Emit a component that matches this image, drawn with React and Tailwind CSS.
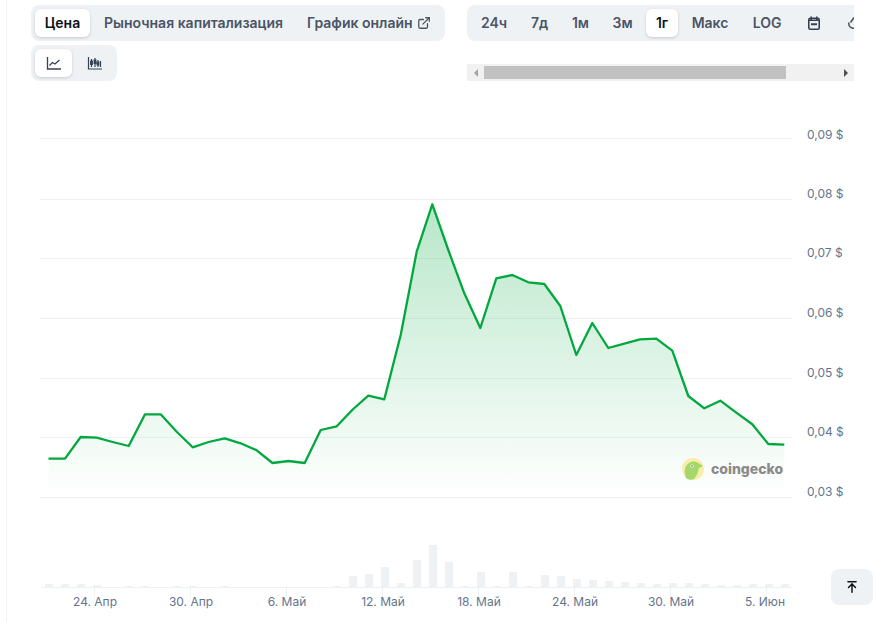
import React from 'react';
import { ExternalLink, ArrowUpToLine } from 'lucide-react';

const points = [
  [48.5, 458.7], [65, 458.7], [80.7, 437], [96.7, 437.7], [112.7, 442], [128.7, 446], [145, 414.3], [160.7, 414.3],
  [176.7, 431.7], [192.7, 447.3], [208.5, 442], [224.7, 438.3], [240.7, 443.3], [256.7, 450.3], [272.5, 463], [288.7, 461],
  [304.7, 463], [320.7, 430], [336.7, 426.3], [352.7, 409.5], [368.3, 395.7], [384.3, 399.3], [400.7, 335], [416.7, 251.7],
  [432.3, 204.3], [448.3, 250], [464.3, 293.3], [480.3, 328], [496.3, 278.3], [512.3, 275], [528.3, 282.3], [544.3, 284],
  [560.3, 306], [576.3, 355], [592.3, 323], [608.3, 348], [624.3, 343.7], [640, 339.3], [656.3, 338.7], [672.3, 350.7],
  [688.3, 396], [704.3, 408.3], [720.3, 400.7], [736.3, 412.7], [752.3, 424.3], [768.3, 444], [784.3, 444.7],
];

const volumes = [
  3, 3, 3, 2, 0, 1, 1, 0, 1, 1, 0, 1, 0, 0, 0, 0, 0, 0, 1, 11, 13, 20, 4, 27, 42, 25, 1, 15, 1, 15, 1, 12, 11, 8, 7, 6, 5, 4, 3, 4, 4, 3, 2, 2, 3, 3, 3,
];

const gridLines = [138, 199, 258, 318, 378, 437, 497];
const priceLabels = [
  ['0,09 $', 139], ['0,08 $', 198], ['0,07 $', 257], ['0,06 $', 317], ['0,05 $', 377], ['0,04 $', 436], ['0,03 $', 496],
];
const dateLabels = [
  ['24. Апр', 95], ['30. Апр', 191], ['6. Май', 287], ['12. Май', 383], ['18. Май', 479], ['24. Май', 575], ['30. Май', 671],
];
const dateTicks = [94.5, 190.5, 286.5, 382.5, 478.5, 574.5, 670.5, 766.5];

const line = points.map((p) => p.join(',')).join(' ');
const area = `48.5,488 ${line} 784.3,488`;

const Tab = ({ active, className, children }) => (
  <div
    className={
      active
        ? `flex h-7 shrink-0 items-center rounded-md bg-white text-[#0d1217] shadow-[0_1px_3px_rgba(16,24,40,0.18)] ${className}`
        : `flex h-7 shrink-0 items-center text-[#4b5565] ${className}`
    }
  >
    {children}
  </div>
);

const LineIcon = () => (
  <svg width="16" height="16" viewBox="0 0 16 16" fill="none" stroke="#364152" strokeWidth="1.3">
    <path d="M1.5 2v12h13.5" />
    <path d="M3.5 10.5l3-3 2.5 1.5 4.5-4" />
  </svg>
);

const CandleIcon = () => (
  <svg width="16" height="16" viewBox="0 0 16 16" fill="none" stroke="#364152" strokeWidth="1.2">
    <path d="M1.5 2v12h13.5" />
    <path d="M4.5 4v8M8 3v9M11 5v7M13.5 6v6" />
    <path d="M3.7 6h1.6v3.5H3.7zM7.2 5h1.6v3.5H7.2zM10.2 7h1.6v3H10.2z" fill="#364152" />
  </svg>
);

const CalendarIcon = () => (
  <svg width="12" height="14" viewBox="0 0 12 14" fill="none" stroke="#364152" strokeWidth="1.6">
    <rect x="0.8" y="2.3" width="10.4" height="10.9" rx="1.5" />
    <path d="M3.2 0.5v3M8.8 0.5v3M1 4.3h10" />
    <path d="M3 8.2h6" strokeWidth="2" />
  </svg>
);

// only the left edge of this icon is showing, the rest is cut off by the tab bar
const CutOffIcon = () => (
  <svg width="6" height="14" viewBox="0 0 6 14" fill="none" stroke="#4b5565" strokeWidth="1.6">
    <path d="M0.8 6.5v1.2c0 2.6 2.2 4.6 5.2 4.6" />
    <path d="M2.5 6.5L6 1.5" />
  </svg>
);

const Scrollbar = () => (
  <div className="mt-[23px] flex h-[17px] w-[387px] items-center bg-[#f1f1f1]">
    <div className="flex w-[17px] justify-center">
      <div className="h-0 w-0 border-y-4 border-r-4 border-y-transparent border-r-[#a3a3a3]" />
    </div>
    <div className="h-[13px] w-[302px] bg-[#c1c1c1]" />
    <div className="flex flex-1 justify-end pr-[6px]">
      <div className="h-0 w-0 border-y-4 border-l-4 border-y-transparent border-l-[#505050]" />
    </div>
  </div>
);

export default function App() {
  return (
    <div className="relative h-[622px] w-[877px] overflow-hidden bg-white font-['Inter',sans-serif]">
      <div className="ml-[6px] h-full border-l border-[#f3f4f6] pl-[24px] pt-[5px]">
        <div className="flex items-start justify-between pr-[23px]">
          <div className="flex w-[414px] flex-col gap-1">
            <div className="flex h-9 items-center rounded-lg bg-[#eff2f5] px-1 text-sm font-semibold">
              <Tab active className="w-[55px] justify-center">Цена</Tab>
              <Tab className="ml-[14px]">Рыночная капитализация</Tab>
              <Tab className="ml-6">
                График онлайн
                <ExternalLink className="ml-1" size={14} strokeWidth={2.2} />
              </Tab>
            </div>
            <div className="flex h-9 w-[86px] items-center gap-1 rounded-lg bg-[#eff2f5] px-1">
              <Tab active className="w-[37px] justify-center"><LineIcon /></Tab>
              <Tab className="w-[37px] justify-center"><CandleIcon /></Tab>
            </div>
          </div>

          <div className="w-[387px]">
            <div className="flex h-9 items-center overflow-hidden rounded-l-lg bg-[#eff2f5] pl-[14px] text-sm font-semibold">
              <Tab className="w-[26px] justify-center">24ч</Tab>
              <Tab className="ml-6 w-[17px] justify-center">7д</Tab>
              <Tab className="ml-6 w-[17px] justify-center">1м</Tab>
              <Tab className="ml-6 w-[19px] justify-center">3м</Tab>
              <Tab active className="ml-[14px] w-[32px] justify-center">1г</Tab>
              <Tab className="ml-[14px] w-[36px] justify-center">Макс</Tab>
              <Tab className="ml-[25px] w-[28px] justify-center">LOG</Tab>
              <Tab className="ml-[27px]"><CalendarIcon /></Tab>
              <Tab className="ml-[28px]"><CutOffIcon /></Tab>
            </div>
            <Scrollbar />
          </div>
        </div>
      </div>

      {/* chart is one drawing, same coordinates as the page */}
      <svg className="absolute left-0 top-0" width="877" height="622" viewBox="0 0 877 622" fontFamily="Inter, sans-serif" fontSize="12">
        <defs>
          <linearGradient id="priceFill" gradientUnits="userSpaceOnUse" x1="0" y1="204" x2="0" y2="498">
            <stop offset="0" stopColor="#00a83e" stopOpacity="0.28" />
            <stop offset="1" stopColor="#00a83e" stopOpacity="0" />
          </linearGradient>
        </defs>
        {gridLines.map((y) => (
          <line key={y} x1="40" x2="792" y1={y + 0.5} y2={y + 0.5} stroke="#eff2f5" />
        ))}
        <polygon points={area} fill="url(#priceFill)" />
        <polyline points={line} fill="none" stroke="#00a83e" strokeWidth="2.3" strokeLinejoin="round" />
        {volumes.map((h, i) => (
          <rect key={i} x={45 + i * 16} y={587 - h} width="8" height={h} fill="#eff2f5" />
        ))}
        <line x1="41" x2="792" y1="587.5" y2="587.5" stroke="#eff2f5" />
        {dateTicks.map((x) => (
          <line key={x} x1={x} x2={x} y1="588" y2="597" stroke="#eff2f5" />
        ))}
        {priceLabels.map(([label, y]) => (
          <text key={label} x="807" y={y} fill="#64748b">{label}</text>
        ))}
        {dateLabels.map(([label, x]) => (
          <text key={label} x={x} y="606" textAnchor="middle" fill="#64748b">{label}</text>
        ))}
        <text x="785" y="606" textAnchor="end" fill="#64748b">5. Июн</text>
        <circle cx="693" cy="469" r="11" fill="#f8eeaa" />
        <path d="M686 478c-2-5-2-12 3-15 3-2 7-2 9 0 2 1 4 2 5 3l-4 2c-1 4-2 8-5 11-3 1-6 1-8-1z" fill="#a5d86a" />
        <circle cx="692" cy="466" r="1.6" fill="#fff" />
        <circle cx="692" cy="466" r="0.8" fill="#555" />
        <text x="711" y="473.5" fontSize="14" fontWeight="800" fill="#8a8a8a">coingecko</text>
      </svg>

      <div className="absolute left-[831px] top-[569px] flex h-9 w-[42px] items-center justify-center rounded-lg bg-[#eff2f5] text-[#0d1217]">
        <ArrowUpToLine size={14} strokeWidth={2.5} />
      </div>
    </div>
  );
}
